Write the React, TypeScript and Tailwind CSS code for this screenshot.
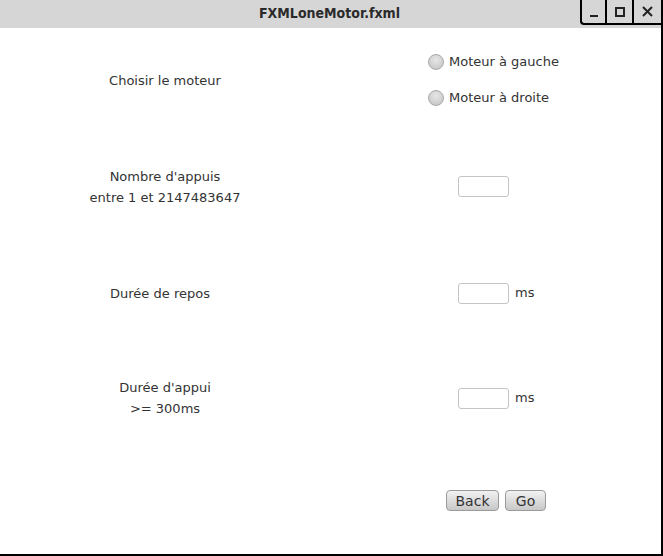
import { ReactNode } from "react";

const font = { fontFamily: '"DejaVu Sans", sans-serif' };

const Radio = ({ label }: { label: string }) => (
  <div className="flex items-center gap-[5px] h-5">
    <span className="w-4 h-4 rounded-full border border-[#a8a8a8] bg-[radial-gradient(circle_at_50%_35%,#e6e6e6,#c2c2c2)]" />
    <span>{label}</span>
  </div>
);

const Field = ({ unit }: { unit?: string }) => (
  <div className="flex items-center gap-[6px]">
    <div className="w-[51px] h-[21px] rounded-[3px] border border-[#c4c4c4] bg-white" />
    {unit && <span>{unit}</span>}
  </div>
);

const Row = ({
  left,
  right,
  className,
}: {
  left: ReactNode;
  right: ReactNode;
  className: string;
}) => (
  <div className={`flex items-center ${className}`}>
    <div className="w-[330px] text-center leading-[21px]">{left}</div>
    <div className="flex-1">{right}</div>
  </div>
);

const Btn = ({ children, w }: { children: ReactNode; w: string }) => (
  <button
    className={`${w} h-[21px] rounded-[4px] border border-[#9a9a9a] bg-gradient-to-b from-[#f2f2f2] to-[#c8c8c8] text-[14px] leading-none text-[#333]`}
  >
    {children}
  </button>
);

export default function App() {
  return (
    <div
      className="w-[663px] h-[556px] bg-white text-[13px] text-[#333] border-r-2 border-b-2 border-black flex flex-col overflow-hidden"
      style={font}
    >
      <div className="relative h-[28px] bg-[#d6d6d6] flex items-center justify-center shrink-0">
        <span
          className="font-bold text-[14px] text-[#2a2a2a] -mt-[1px] ml-[-2px]"
          style={{ fontFamily: '"DejaVu Sans Condensed", "DejaVu Sans", sans-serif', fontStretch: "condensed" }}
        >
          FXMLoneMotor.fxml
        </span>
        <div className="absolute right-0 top-0 h-[25px] w-[81px] flex border-l-2 border-b-2 border-black rounded-bl-[4px] bg-[#d6d6d6]">
          <div className="w-[25px] flex items-end justify-center pb-[6px] border-r-2 border-black">
            <span className="w-[8px] h-[2px] bg-[#222]" />
          </div>
          <div className="w-[27px] flex items-center justify-center border-r-2 border-black">
            <span className="w-[10px] h-[10px] border-2 border-[#222]" />
          </div>
          <div className="flex-1 flex items-center justify-center">
            <svg width="11" height="11" viewBox="0 0 11 11">
              <path d="M1 1 L10 10 M10 1 L1 10" stroke="#222" strokeWidth="2" />
            </svg>
          </div>
        </div>
      </div>

      <Row
        className="h-[106px]"
        left={<div className="-mt-[1px]">Choisir le moteur</div>}
        right={
          <div className="flex flex-col gap-[16px] pl-[98px] -mt-[3px]">
            <Radio label="Moteur à gauche" />
            <Radio label="Moteur à droite" />
          </div>
        }
      />
      <Row
        className="h-[106px]"
        left={
          <>
            <div>Nombre d'appuis</div>
            <div>entre 1 et 2147483647</div>
          </>
        }
        right={
          <div className="pl-[128px] -mt-[2px]">
            <Field />
          </div>
        }
      />
      <Row
        className="h-[106px]"
        left={<div className="mr-[10px]">Durée de repos</div>}
        right={
          <div className="pl-[128px]">
            <Field unit="ms" />
          </div>
        }
      />
      <Row
        className="h-[104px]"
        left={
          <>
            <div>Durée d'appui</div>
            <div>&gt;= 300ms</div>
          </>
        }
        right={
          <div className="pl-[128px]">
            <Field unit="ms" />
          </div>
        }
      />
      <div className="flex gap-[6px] pl-[446px] pt-[40px]">
        <Btn w="w-[53px]">Back</Btn>
        <Btn w="w-[41px]">Go</Btn>
      </div>
    </div>
  );
}
